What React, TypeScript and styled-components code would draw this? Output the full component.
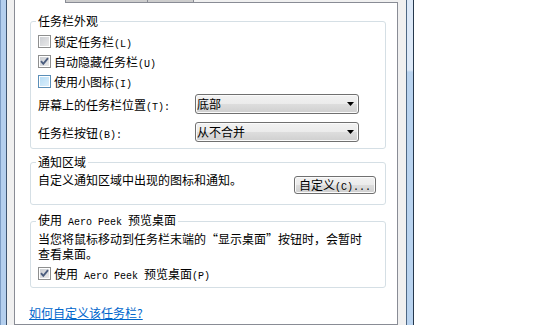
import React from "react";
import styled, { createGlobalStyle } from "styled-components";

const GlobalStyle = createGlobalStyle`
  body {
    margin: 0;
    background: #ffffff;
  }
`;

const Screen = styled.div`
  display: flex;
  width: 550px;
  height: 325px;
  overflow: hidden;
  font-family: "Noto Sans CJK SC", "Liberation Sans", sans-serif;
  font-size: 12px;
  color: #000000;
`;

const FrameLeft = styled.div`
  flex: none;
  width: 7px;
  background: linear-gradient(
    to right,
    #7d9dc5 0 1px,
    #b4cfee 1px 6px,
    #3f5570 6px 7px
  );
`;

const FrameRight = styled.div`
  flex: none;
  width: 8px;
  box-sizing: border-box;
  border-left: 1px solid #4d6784;
  border-right: 1px solid #26384c;
  background: linear-gradient(to bottom, #dde9f8 0 70px, #b9d3ef 72px);
`;

const Dialog = styled.div`
  flex: none;
  width: 399px;
  box-sizing: border-box;
  padding: 0 8px 0 7px;
  background: #f0f0f0;
  display: flex;
  flex-direction: column;
`;

const TabStrip = styled.div`
  display: flex;
  flex: none;
  height: 3px;
`;

const Tab = styled.div<{ $w: number; $active?: boolean }>`
  flex: none;
  width: ${(p) => p.$w}px;
  box-sizing: border-box;
  border-right: 1px solid #898c95;
  background: ${(p) => (p.$active ? "#ffffff" : "#cdcdcd")};
  border-left: ${(p) => (p.$active ? "1px solid #898c95" : "none")};
  border-bottom: ${(p) => (p.$active ? "none" : "1px solid #898c95")};
`;

const TabFill = styled.div`
  flex: 1;
  border-bottom: 1px solid #898c95;
`;

const Panel = styled.div`
  flex: 1;
  background: #ffffff;
  border: 1px solid #898c95;
  border-top: none;
  padding: 11px 11px 0 15px;
  display: flex;
  flex-direction: column;
`;

const Group = styled.fieldset<{ $pb: number; $mt?: number }>`
  margin: ${(p) => p.$mt ?? 0}px 0 0;
  min-width: 0;
  border: 1px solid #d5dfe5;
  border-radius: 3px;
  padding: 0 9px ${(p) => p.$pb}px 7px;
`;

const Legend = styled.legend`
  padding: 0 2px;
  margin-left: -2px;
  line-height: 14px;
`;

const Key = styled.span`
  font-family: "Liberation Mono", "DejaVu Sans Mono", monospace;
  font-size: 10px;
`;

const CheckList = styled.div`
  display: flex;
  flex-direction: column;
  margin-top: 3px;
`;

const CheckRow = styled.label<{ $mt?: number }>`
  display: flex;
  align-items: center;
  gap: 3px;
  height: 20px;
  margin-top: ${(p) => p.$mt ?? 0}px;
`;

const Box = styled.span<{ $hot?: boolean }>`
  flex: none;
  width: 13px;
  height: 13px;
  box-sizing: border-box;
  border: 1px solid ${(p) => (p.$hot ? "#5b8fb8" : "#8e8f8f")};
  box-shadow: inset 0 0 0 1px #ffffff;
  background: ${(p) =>
    p.$hot
      ? "linear-gradient(135deg, #b4dbf5, #dff1fc)"
      : "linear-gradient(135deg, #c9ccd1, #ececec)"};
  display: flex;
  align-items: center;
  justify-content: center;
`;

const FieldGrid = styled.div`
  display: grid;
  grid-template-columns: 157px 164px;
  row-gap: 8px;
  align-items: center;
  margin-top: 3px;
`;

const Select = styled.div`
  height: 20px;
  box-sizing: border-box;
  border: 1px solid #707070;
  border-radius: 3px;
  box-shadow: inset 0 0 0 1px #fbfbfb;
  background: linear-gradient(
    to bottom,
    #f2f2f2 0%,
    #ebebeb 50%,
    #dddddd 51%,
    #cfcfcf 100%
  );
  display: flex;
  align-items: center;
  justify-content: space-between;
  padding: 0 4px 0 1px;
  line-height: 16px;
`;

const NotifyRow = styled.div`
  display: flex;
  align-items: flex-start;
  justify-content: space-between;
  margin-top: 3px;
  line-height: 16px;
`;

const Button = styled.button`
  flex: none;
  width: 82px;
  height: 18px;
  margin-top: 4px;
  padding: 0;
  font: inherit;
  line-height: 16px;
  color: #000000;
  border: 1px solid #707070;
  border-radius: 3px;
  box-shadow: inset 0 0 0 1px #fbfbfb;
  background: linear-gradient(
    to bottom,
    #f2f2f2 0%,
    #ebebeb 50%,
    #dddddd 51%,
    #cfcfcf 100%
  );
`;

const Para = styled.div`
  margin-top: 1px;
  display: flex;
  flex-direction: column;
`;

const ParaLine = styled.span`
  height: 15px;
  line-height: 15px;
  white-space: nowrap;
`;

const HelpLink = styled.a`
  align-self: flex-start;
  margin: 17px 0 0 -1px;
  line-height: 16px;
  color: #0066cc;
  text-decoration: underline;
`;

function CheckMark() {
  return (
    <svg width="11" height="11" viewBox="0 0 11 11">
      <path
        d="M2 5.2 L4.3 7.8 L9 2.2"
        fill="none"
        stroke="#4b5d7e"
        strokeWidth="1.9"
      />
    </svg>
  );
}

function Arrow() {
  return (
    <svg width="7" height="4" viewBox="0 0 7 4">
      <path d="M0 0 H7 L3.5 4 Z" fill="#000000" />
    </svg>
  );
}

function Check({ checked, hot, children, mt }: {
  checked?: boolean;
  hot?: boolean;
  mt?: number;
  children: React.ReactNode;
}) {
  return (
    <CheckRow $mt={mt}>
      <Box $hot={hot}>{checked && <CheckMark />}</Box>
      <span>{children}</span>
    </CheckRow>
  );
}

export default function App() {
  return (
    <>
      <GlobalStyle />
      <Screen>
        <FrameLeft />
        <Dialog>
          <TabStrip>
            <Tab $w={52} $active />
            <Tab $w={82} />
            <Tab $w={46} />
            <TabFill />
          </TabStrip>
          <Panel>
            <Group $pb={6}>
              <Legend>任务栏外观</Legend>
              <CheckList>
                <Check>
                  锁定任务栏<Key>(L)</Key>
                </Check>
                <Check checked>
                  自动隐藏任务栏<Key>(U)</Key>
                </Check>
                <Check hot>
                  使用小图标<Key>(I)</Key>
                </Check>
              </CheckList>
              <FieldGrid>
                <span>
                  屏幕上的任务栏位置<Key>(T):</Key>
                </span>
                <Select>
                  <span>底部</span>
                  <Arrow />
                </Select>
                <span>
                  任务栏按钮<Key>(B):</Key>
                </span>
                <Select>
                  <span>从不合并</span>
                  <Arrow />
                </Select>
              </FieldGrid>
            </Group>

            <Group $pb={10} $mt={6}>
              <Legend>通知区域</Legend>
              <NotifyRow>
                <span>自定义通知区域中出现的图标和通知。</span>
                <Button>
                  自定义<Key>(C)...</Key>
                </Button>
              </NotifyRow>
            </Group>

            <Group $pb={4} $mt={8}>
              <Legend>
                使用<Key> Aero Peek </Key>预览桌面
              </Legend>
              <Para>
                <ParaLine>当您将鼠标移动到任务栏末端的“显示桌面”按钮时，会暂时</ParaLine>
                <ParaLine>查看桌面。</ParaLine>
              </Para>
              <Check checked mt={2}>
                使用<Key> Aero Peek </Key>预览桌面<Key>(P)</Key>
              </Check>
            </Group>

            <HelpLink href="#">如何自定义该任务栏?</HelpLink>
          </Panel>
        </Dialog>
        <FrameRight />
      </Screen>
    </>
  );
}
